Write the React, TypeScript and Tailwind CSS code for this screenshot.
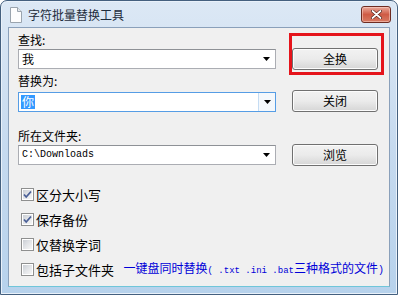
import React from "react";

const ArrowDown: React.FC = () => (
  <svg width="7" height="4" viewBox="0 0 7 4">
    <path d="M0 0h7L3.5 4z" fill="#000" />
  </svg>
);

const ComboBox: React.FC<{
  value: string;
  mono?: boolean;
  selected?: boolean;
  focused?: boolean;
}> = ({ value, mono, selected, focused }) => (
  <div
    className={`w-[258px] h-[20px] bg-white border flex items-center ${
      focused ? "border-[#569de5]" : "border-[#abadb3] border-t-[#8e9196]"
    }`}
  >
    <div className="flex-1 pl-[2px] flex items-center">
      {selected ? (
        <span className="bg-[#3399ff] text-white text-[12px] leading-[14px] px-[1px]">
          {value}
        </span>
      ) : (
        <span
          className={
            mono
              ? "font-['Liberation_Mono',monospace] text-[10px] leading-[14px] pl-[1px]"
              : "text-[12px] leading-[14px] pl-[1px]"
          }
        >
          {value}
        </span>
      )}
    </div>
    <div
      className={`w-[17px] h-full flex items-center justify-center ${
        focused ? "border-l border-[#c5dcf3] bg-[#f4f8fc]" : ""
      }`}
    >
      <ArrowDown />
    </div>
  </div>
);

const Button: React.FC<{ label: string }> = ({ label }) => (
  <div className="w-[86px] h-[22px] rounded-[3px] border border-[#707070] bg-gradient-to-b from-[#f2f2f2] via-[#ebebeb] to-[#d6d6d6] shadow-[inset_0_0_0_1px_#fcfcfc] flex items-center justify-center text-[12px] leading-[14px]">
    {label}
  </div>
);

const CheckBox: React.FC<{ label: string; checked?: boolean }> = ({
  label,
  checked,
}) => (
  <div className="h-[25px] flex items-center">
    <div className="w-[13px] h-[13px] border border-[#8e8f8f] bg-white p-[1px]">
      <div className="w-full h-full bg-gradient-to-br from-[#cbcfd5] via-[#e3e5e8] to-[#f6f6f6] flex items-center justify-center">
        {checked && (
          <svg width="9" height="9" viewBox="0 0 9 9">
            <path
              d="M1 4.5l2.2 2.5L8 1.5"
              fill="none"
              stroke="#4a5f97"
              strokeWidth="1.8"
            />
          </svg>
        )}
      </div>
    </div>
    <span className="ml-[2px] text-[13px] leading-[16px]">{label}</span>
  </div>
);

export default function App() {
  return (
    <div className="w-[398px] h-[295px] overflow-hidden bg-white font-['Noto_Sans_CJK_SC',sans-serif] text-black">
      <div className="w-full h-full flex flex-col rounded-t-[7px] border border-[#44607f] bg-gradient-to-b from-[#dce8f5] via-[#c6daef] to-[#b7d2ec] px-[7px] pb-[7px] shadow-[inset_0_0_0_1px_#e9f1fa]">
        {/* Title bar */}
        <div className="h-[19px] mt-[4px] flex items-center">
          <svg width="14" height="16" viewBox="0 0 14 16" className="ml-[1px]">
            <path d="M1.5 0.5h7l4 4v11h-11z" fill="#fdfdfd" stroke="#9aa4ae" />
            <path d="M8.5 0.5v4h4" fill="#e4e8ec" stroke="#9aa4ae" />
          </svg>
          <span className="ml-[5px] text-[12px] leading-[14px] text-[#1e2c3c]">
            字符批量替换工具
          </span>
          <div className="ml-auto mr-[-1px] w-[30px] h-[17px] rounded-[3px] border border-[#6e2c22] bg-gradient-to-b from-[#e9a99b] via-[#cf5b45] to-[#d77a63] shadow-[inset_0_0_0_1px_rgba(255,220,210,0.5)] flex items-center justify-center">
            <svg width="11" height="9" viewBox="0 0 11 9">
              <path
                d="M1.5 1l8 7M9.5 1l-8 7"
                stroke="#4a1a12"
                strokeWidth="3"
                strokeLinecap="round"
              />
              <path
                d="M1.5 1l8 7M9.5 1l-8 7"
                stroke="#fff"
                strokeWidth="1.8"
                strokeLinecap="round"
              />
            </svg>
          </div>
        </div>

        {/* Client area */}
        <div className="relative flex-1 mt-[3px] bg-[#f0f0f0] border border-[#8aa0ba] border-b-[#6fc6da] pl-[9px] pr-[5px] pt-[5px]">
          <div className="text-[12px] leading-[14px]">查找:</div>
          <div className="mt-[1px] flex items-center h-[22px]">
            <ComboBox value="我" />
            <div className="ml-[16px]">
              <Button label="全换" />
            </div>
          </div>

          <div className="mt-[4px] text-[12px] leading-[14px]">替换为:</div>
          <div className="mt-[3px] flex items-center h-[22px]">
            <ComboBox value="你" selected focused />
            <div className="ml-[16px] mt-[-2px]">
              <Button label="关闭" />
            </div>
          </div>

          <div className="mt-[16px] text-[12px] leading-[14px]">所在文件夹:</div>
          <div className="mt-[1px] flex items-center h-[22px]">
            <ComboBox value="C:\Downloads" mono />
            <div className="ml-[16px]">
              <Button label="浏览" />
            </div>
          </div>

          <div className="mt-[16px] pl-[3px]">
            <CheckBox label="区分大小写" checked />
            <CheckBox label="保存备份" checked />
            <CheckBox label="仅替换字词" />
            <div className="flex items-center">
              <CheckBox label="包括子文件夹" />
              <span className="ml-auto text-[12px] leading-[14px] text-[#0000d8] whitespace-nowrap">
                一键盘同时替换
                <span className="font-['Liberation_Mono',monospace] text-[9px]">
                  ( .txt .ini .bat
                </span>
                三种格式的文件
                <span className="font-['Liberation_Mono',monospace] text-[10px]">
                  )
                </span>
              </span>
            </div>
          </div>

          {/* highlight annotation */}
          <div className="absolute left-[280px] top-[5px] w-[95px] h-[42px] border-[3px] border-[#e5141b]" />
        </div>
      </div>
    </div>
  );
}
